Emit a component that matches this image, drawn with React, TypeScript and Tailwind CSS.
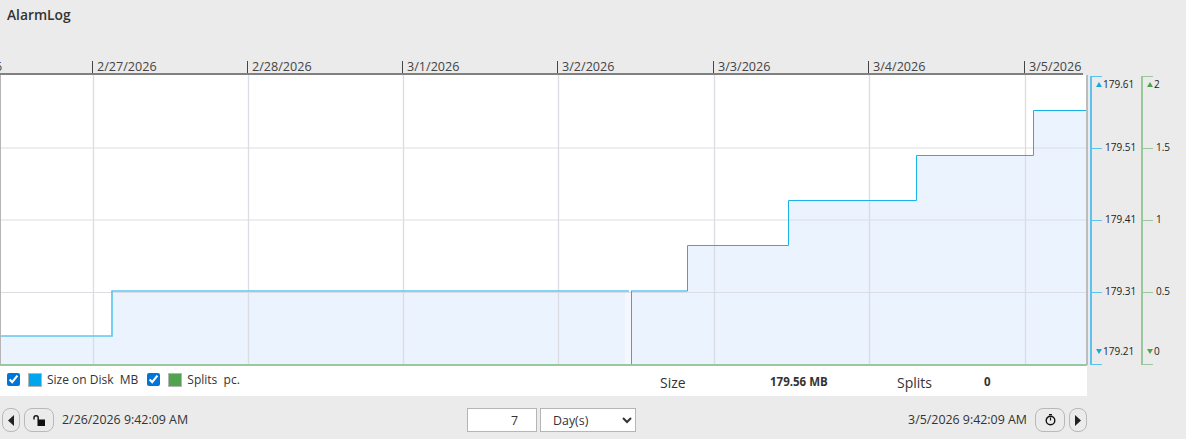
import React from "react";

const font = { fontFamily: '"Open Sans", "Noto Sans", sans-serif' };

const dates = [
  { label: "2/27/2026", w: "w-[155px]" },
  { label: "2/28/2026", w: "w-[155px]" },
  { label: "3/1/2026", w: "w-[155px]" },
  { label: "3/2/2026", w: "w-[156px]" },
  { label: "3/3/2026", w: "w-[155px]" },
  { label: "3/4/2026", w: "w-[156px]" },
  { label: "3/5/2026", w: "w-[59px]" },
];

function Triangle({ up, color }: { up: boolean; color: string }) {
  return (
    <svg width="6" height="5" viewBox="0 0 6 5" className="shrink-0">
      <path d={up ? "M3 0L6 5H0Z" : "M0 0H6L3 5Z"} fill={color} />
    </svg>
  );
}

function Chart() {
  const vs = [93.5, 248.5, 403.5, 558.5, 714.5, 869.5, 1025.5];
  const hs = [148, 220, 292.5];
  const h = 290;
  const top = 75;
  return (
    <svg width="1088" height={h + 1} viewBox={`0 0 1088 ${h + 1}`} className="block">
      <rect x="0" y="0" width="1087" height={h + 1} fill="#ffffff" />
      <path d={`M0 ${336 - top} H111 V${291 - top} H629 V${h} H0Z`} fill="#ebf3fe" />
      <path d={`M631 ${h} V${291 - top} H687.5 V${246 - top} H788.5 V${201 - top} H916.5 V${156 - top} H1033.5 V${110 - top} H1087 V${h}Z`} fill="#ebf3fe" />
      <rect x="625" y={291 - top} width="6" height={h - 216} fill="#f4f8fe" />
      {vs.map((x) => (
        <line key={x} x1={x} x2={x} y1="0" y2={h} stroke="#dcdde2" strokeWidth="1.3" />
      ))}
      {hs.map((y) => (
        <line key={y} x1="0" x2="1087" y1={y - top} y2={y - top} stroke="#dcdde2" strokeWidth="1" />
      ))}
      <path d={`M0 ${336 - top} H112 V${291 - top} H629`} fill="none" stroke="#62c6f0" strokeWidth="1.7" />
      <path d={`M631 ${291 - top} H687.5`} fill="none" stroke="#62c6f0" strokeWidth="1.7" />
      <path d={`M631.5 ${365 - top} V${291 - top}`} fill="none" stroke="#1ab2ea" strokeWidth="1" />
      <path
        d={`M687.5 ${291 - top} V${245.5 - top} H788.5 V${200.5 - top} H916.5 V${155.5 - top} H1033.5 V${110.5 - top} H1087`}
        fill="none"
        stroke="#1ab2ea"
        strokeWidth="1"
      />
      <line x1="0.5" x2="0.5" y1="0" y2={h} stroke="#b5b5b5" />
      <rect x="1086" y="0" width="2" height={h} fill="#bcbcbc" />
      <line x1="0" x2="1087" y1={h} y2={h} stroke="#9cc79c" strokeWidth="2" />
    </svg>
  );
}

function Axis({
  labels,
  border,
  tick,
  tri,
  labelLeft,
  edgeLeft,
}: {
  labels: string[];
  border: string;
  tick: string;
  tri: string;
  labelLeft: string;
  edgeLeft: string;
}) {
  return (
    <div className={`flex h-[289px] w-[12px] flex-col justify-between border-l-2 ${border}`}>
      {labels.map((l, i) => {
        const first = i === 0;
        const last = i === labels.length - 1;
        return (
          <div key={l} className="relative h-px">
            <div className={`h-px w-[10px] ${tick}`} />
            <div
              className={`absolute flex items-center gap-[1px] whitespace-nowrap text-[10px] leading-[12px] text-[#222] ${
                first ? `top-[2px] ${edgeLeft}` : last ? `-top-[19px] ${edgeLeft}` : `-top-[7px] ${labelLeft}`
              }`}
            >
              {first && <Triangle up color={tri} />}
              {last && <Triangle up={false} color={tri} />}
              {l}
            </div>
          </div>
        );
      })}
    </div>
  );
}

function RoundBtn({ className, children }: { className: string; children: React.ReactNode }) {
  return (
    <div
      className={`flex h-[24px] items-center justify-center rounded-[8px] border border-[#b9b9b9] bg-[#ebebeb] ${className}`}
    >
      {children}
    </div>
  );
}

export default function App() {
  return (
    <div className="flex h-[439px] w-[1186px] flex-col overflow-hidden bg-[#ebebeb] text-[#222]" style={font}>
      <div className="h-[61px] pl-[7px] pt-[6px] text-[13.8px] font-semibold leading-[18px] text-[#333]">AlarmLog</div>

      <div className="flex h-[12px] w-[1087px]">
        <div className="w-[92px] shrink-0 text-[12.4px] leading-[12px] text-[#444]">
          <span className="-ml-[5px] block">6</span>
        </div>
        {dates.map((d) => (
          <div
            key={d.label}
            className={`h-[12px] shrink-0 whitespace-nowrap border-l border-[#444] pl-[4px] text-[12.6px] leading-[12px] text-[#444] ${d.w}`}
          >
            {d.label}
          </div>
        ))}
      </div>
      <div className="h-[2px] w-[1083px] bg-[#808080]" />

      <div className="flex h-[291px] items-start">
        <Chart />
        <div className="ml-[2px] mt-[1px]">
          <Axis
            labels={["179.61", "179.51", "179.41", "179.31", "179.21"]}
            border="border-[#5cc3ee]"
            tick="bg-[#5cc3ee]"
            tri="#19a7e0"
            labelLeft="left-[13px]"
            edgeLeft="left-[4px]"
          />
        </div>
        <div className="ml-[39px] mt-[1px]">
          <Axis
            labels={["2", "1.5", "1", "0.5", "0"]}
            border="border-[#9cc79c]"
            tick="bg-[#9cc79c]"
            tri="#4ea34e"
            labelLeft="left-[13px]"
            edgeLeft="left-[4px]"
          />
        </div>
      </div>

      <div className="flex h-[30px] w-[1087px] items-center bg-white text-[12px] text-[#333]">
        <div className="flex w-[660px] items-center pb-[3px]">
          <input type="checkbox" readOnly checked className="ml-[7px] h-[13px] w-[13px] accent-[#0075d5]" />
          <span className="ml-[8px] h-[14px] w-[14px] border border-[#b5b5b5] bg-[#00a6ed]" />
          <span className="ml-[5px] whitespace-nowrap">Size on Disk&nbsp; MB</span>
          <input type="checkbox" readOnly checked className="ml-[9px] h-[13px] w-[13px] accent-[#0075d5]" />
          <span className="ml-[8px] h-[14px] w-[14px] border border-[#b5b5b5] bg-[#52a350]" />
          <span className="ml-[5px] whitespace-nowrap">Splits&nbsp; pc.</span>
        </div>
        <div className="flex items-center pt-[2px]">
          <span className="w-[110px] text-[14px]">Size</span>
          <span className="w-[127px] text-[11.5px] font-bold">179.56 MB</span>
          <span className="w-[87px] text-[14px]">Splits</span>
          <span className="text-[11.5px] font-bold">0</span>
        </div>
      </div>

      <div className="flex w-[1087px] flex-1 items-center pl-[2px] pt-[5px] text-[12.4px] leading-none">
        <div className="flex w-[465px] items-center">
          <RoundBtn className="w-[18px]">
            <svg width="6" height="11" viewBox="0 0 6 11"><path d="M6 0V11L0 5.5Z" fill="#222" /></svg>
          </RoundBtn>
          <RoundBtn className="ml-[4px] w-[30px]">
            <svg width="13" height="11" viewBox="0 0 13 11">
              <path d="M1 4.5V2.8a2.1 2.1 0 0 1 4.2 0V5" fill="none" stroke="#111" strokeWidth="1.4" />
              <rect x="4.5" y="4.5" width="7.5" height="6.5" fill="#111" />
            </svg>
          </RoundBtn>
          <span className="ml-[8px] whitespace-nowrap text-[#333]">2/26/2026 9:42:09 AM</span>
        </div>
        <div className="flex items-center gap-[3px]">
          <input
            readOnly
            value="7"
            className="h-[24px] w-[70px] border border-[#b5b5b5] bg-white pr-[18px] text-right text-[12.4px] text-[#333]"
          />
          <select
            defaultValue="d"
            className="h-[24px] w-[96px] border border-[#b5b5b5] bg-white pl-[8px] text-[12.4px] text-[#333]"
          >
            <option value="d">Day(s)</option>
          </select>
        </div>
        <div className="ml-auto flex items-center">
          <span className="mr-[8px] whitespace-nowrap text-[#333]">3/5/2026 9:42:09 AM</span>
          <RoundBtn className="w-[30px]">
            <svg width="11" height="12" viewBox="0 0 11 12">
              <circle cx="5.5" cy="6.5" r="4.3" fill="none" stroke="#111" strokeWidth="1.4" />
              <path d="M5.5 3.5V6.5M4 0.7H7" stroke="#111" strokeWidth="1.2" />
            </svg>
          </RoundBtn>
          <RoundBtn className="ml-[4px] w-[18px]">
            <svg width="6" height="11" viewBox="0 0 6 11"><path d="M0 0V11L6 5.5Z" fill="#222" /></svg>
          </RoundBtn>
        </div>
      </div>
    </div>
  );
}
